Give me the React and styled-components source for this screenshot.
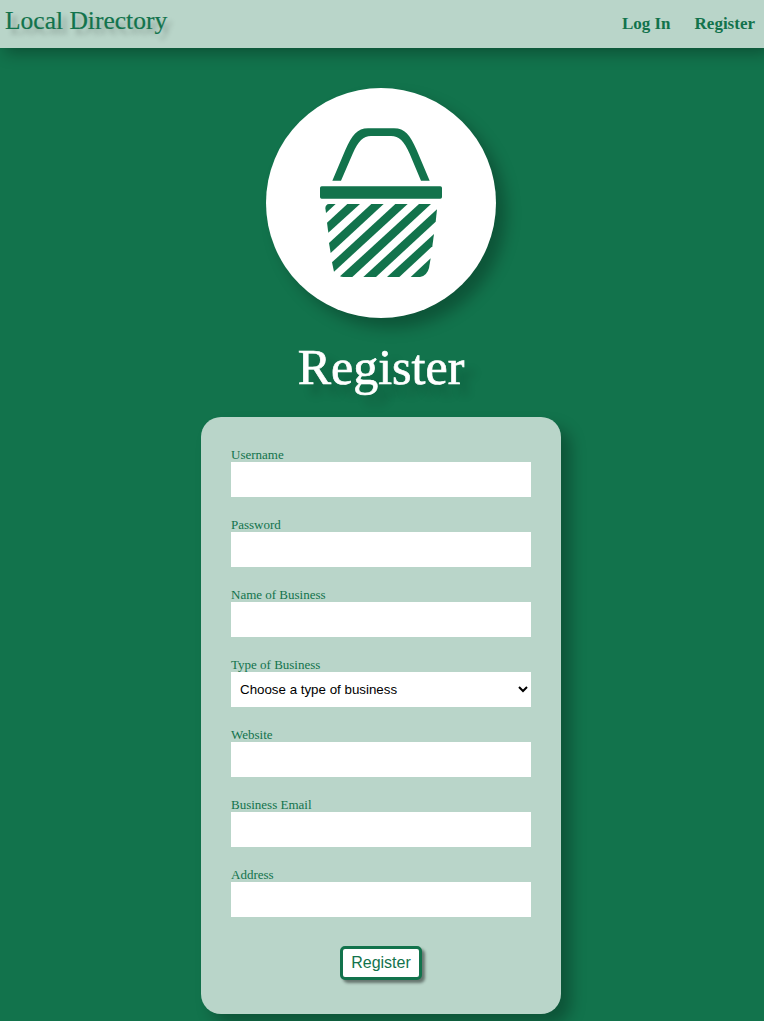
import React from "react";
import styled, { createGlobalStyle } from "styled-components";

const green = "#12734c";
const mint = "#b9d5c9";
const serif = `"Liberation Serif", "Times New Roman", serif`;
const sans = `"Liberation Sans", Arial, sans-serif`;

const GlobalStyle = createGlobalStyle`
  * { box-sizing: border-box; }
  body {
    margin: 0;
    background: ${green};
    font-family: ${serif};
    overflow: hidden;
  }
`;

const Page = styled.div`
  height: 1021px;
  overflow: hidden;
`;

const Header = styled.header`
  display: flex;
  justify-content: space-between;
  height: 48px;
  padding: 0 9px 0 5px;
  background: ${mint};
  color: ${green};
  box-shadow: 5px 5px 15px rgba(0, 0, 0, 0.3);
`;

const Brand = styled.div`
  font-size: 25.5px;
  line-height: 29px;
  padding-top: 6px;
  -webkit-text-stroke: 0.2px ${green};
  text-shadow: 5px 5px 5px rgba(0, 0, 0, 0.25);
`;

const Nav = styled.nav`
  display: flex;
  gap: 24px;
  padding-top: 14px;
`;

const NavLink = styled.a`
  font-size: 17px;
  line-height: 19px;
  font-weight: bold;
  color: ${green};
`;

const Main = styled.main`
  display: flex;
  flex-direction: column;
  align-items: center;
  width: 762px;
  padding-top: 40px;
`;

const Logo = styled.div`
  display: flex;
  align-items: center;
  justify-content: center;
  width: 230px;
  height: 230px;
  border-radius: 50%;
  background: #fff;
  box-shadow: 10px 10px 15px rgba(0, 0, 0, 0.27);
`;

const Title = styled.h1`
  margin: 20px 0 21px;
  font-size: 50px;
  line-height: 58px;
  font-weight: normal;
  color: #fff;
  -webkit-text-stroke: 0.7px #fff;
  text-shadow: 10px 10px 10px rgba(0, 0, 0, 0.2);
`;

const Form = styled.form`
  display: flex;
  flex-direction: column;
  width: 360px;
  height: 597px;
  padding: 30px;
  border-radius: 20px;
  background: ${mint};
  box-shadow: 10px 10px 15px rgba(0, 0, 0, 0.27);
`;

const Field = styled.label`
  display: flex;
  flex-direction: column;
  margin-bottom: 20px;
  font-size: 13px;
  line-height: 15px;
  color: ${green};
`;

const Input = styled.input`
  height: 35px;
  border: 0;
  padding: 0 9px;
  border-radius: 0;
  background: #fff;
  outline: none;
`;

const Select = styled.select`
  height: 35px;
  border: 0;
  border-radius: 0;
  padding: 0 0 0 5px;
  background: #fff;
  color: #000;
  font: 13.333px ${sans};
`;

const Submit = styled.button`
  align-self: center;
  width: 82px;
  height: 34px;
  margin-top: 9px;
  padding: 0;
  border: 3px solid ${green};
  border-radius: 5px;
  background: #fff;
  color: ${green};
  font: 16px ${sans};
  box-shadow: 3px 3px 3px rgba(0, 0, 0, 0.45);
`;

const BasketIcon = styled.svg`
  margin: 0 0 1px 3px;
`;

const Basket = () => (
  <BasketIcon width="145" height="165" viewBox="0 0 435 495" fill={green}>
    <path d="M67 182 L106 90 C126 46 142 25 174 25 L252 25 C285 25 300 46 320 90 L359 182 H333 L299 101 C282 63 267 48 243 48 L183 48 C160 48 145 63 128 101 L93 182 Z" />
    <rect x="30" y="199" width="366" height="37" rx="5" />
    <path d="M57 252 H77 L48 279 L46 264 Q47 253 57 252Z" />
    <path d="M112 252 H150 L55 338 L51 308Z" />
    <path d="M184 252 H221 L62 399 L57 369Z" />
    <path d="M256 252 H293 L72 455 L66 427Z" />
    <path d="M327 252 H363 L127 471 H100 Q94 471 90 469Z" />
    <path d="M381 268 L377 305 L198 471 H160Z" />
    <path d="M372 342 L367 379 L268 471 H231Z" />
    <path d="M362 415 L357 444 Q351 467 330 471 H302Z" />
  </BasketIcon>
);

const fields = [
  "Username",
  "Password",
  "Name of Business",
  "Type of Business",
  "Website",
  "Business Email",
  "Address",
];

export default function App() {
  return (
    <Page>
      <GlobalStyle />
      <Header>
        <Brand>Local Directory</Brand>
        <Nav>
          <NavLink>Log In</NavLink>
          <NavLink>Register</NavLink>
        </Nav>
      </Header>
      <Main>
        <Logo>
          <Basket />
        </Logo>
        <Title>Register</Title>
        <Form>
          {fields.map((name) => (
            <Field key={name}>
              {name}
              {name === "Type of Business" ? (
                <Select defaultValue="">
                  <option value="">Choose a type of business</option>
                </Select>
              ) : (
                <Input />
              )}
            </Field>
          ))}
          <Submit type="button">Register</Submit>
        </Form>
      </Main>
    </Page>
  );
}
